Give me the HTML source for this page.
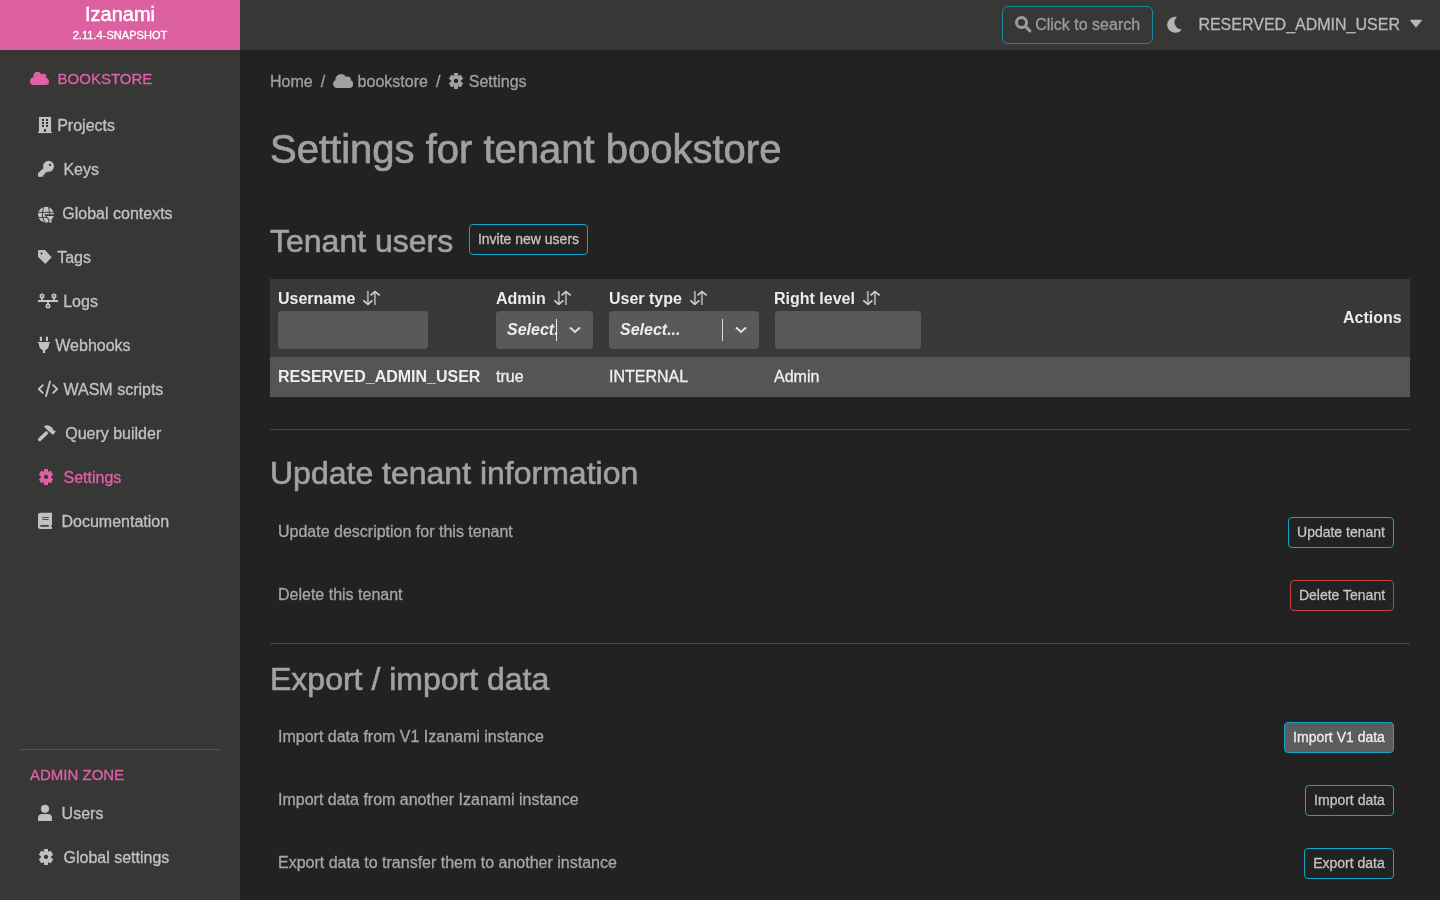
<!DOCTYPE html>
<html><head><meta charset="utf-8">
<style>
*{box-sizing:border-box;margin:0;padding:0}
html,body{width:1440px;height:900px;overflow:hidden;background:#222222;font-family:"Liberation Sans",sans-serif;font-size:16px;line-height:1}
.a{position:absolute;white-space:nowrap;line-height:16px}
svg{position:absolute;overflow:visible}
#root{position:absolute;left:0;top:0;width:1440px;height:900px;background:#222222;will-change:transform;overflow:hidden}
.a,.btn{-webkit-text-stroke:0.3px currentColor}
#side{position:absolute;left:0;top:0;width:240px;height:900px;background:#373735}
#brand{position:absolute;left:0;top:0;width:240px;height:50px;background:#dc5fa0;color:#fff;text-align:center}
#top{position:absolute;left:240px;top:0;width:1200px;height:50px;background:#373735}
.nav{color:#c2c2c2;font-size:16px}
.pink{color:#e060a8}
.btn{position:absolute;border:1px solid #14a6c8;border-radius:4px;color:#c4c4c4;font-size:14px;line-height:29px;text-align:center;white-space:nowrap}
.h2{color:#a2a2a2;font-size:32px;line-height:32px;-webkit-text-stroke:0.6px currentColor}
.txt{color:#a6a6a6;font-size:16px}
.hr{position:absolute;left:270px;width:1140px;height:1px;background:#474747}
.th{color:#ececec;font-weight:bold;font-size:16px;-webkit-text-stroke:0}
.inp{position:absolute;top:311px;height:38px;background:#595959;border-radius:4px}
.sel{color:#ececec;font-weight:bold;font-style:italic;font-size:16px;-webkit-text-stroke:0}
</style></head><body>
<div id="root">
<div id="side"></div>
<div id="brand">
  <div class="a" style="left:0;width:240px;top:4px;font-size:20px;line-height:20px;-webkit-text-stroke:0.5px #fff">Izanami</div>
  <div class="a" style="left:0;width:240px;top:30px;font-size:11px;line-height:11px;-webkit-text-stroke:0.35px #fff;letter-spacing:0.05px">2.11.4-SNAPSHOT</div>
</div>
<div id="top"></div>

<!-- sidebar -->
<svg style="left:26px;top:64px" width="30" height="30" viewBox="0 0 900 900"><g fill="#df60a4"><circle cx="345" cy="355" r="125"/><circle cx="525" cy="380" r="85"/><circle cx="240" cy="515" r="118"/><circle cx="585" cy="525" r="105"/><rect x="240" y="420" width="345" height="210"/></g></svg>
<div class="a pink" style="left:57.6px;top:71px;font-size:15px;line-height:15px">BOOKSTORE</div>

<svg style="left:34px;top:112px" width="24" height="24" viewBox="0 0 900 900"><g fill="#c0c0c0"><rect x="185" y="185" width="455" height="575"/><rect x="145" y="745" width="535" height="45"/></g><g fill="#2a2a2a"><rect x="300" y="265" width="75" height="70"/><rect x="450" y="265" width="75" height="70"/><rect x="300" y="375" width="75" height="70"/><rect x="450" y="375" width="75" height="70"/><rect x="300" y="485" width="75" height="70"/><rect x="450" y="485" width="75" height="70"/><rect x="375" y="640" width="70" height="105"/></g></svg>
<div class="a nav" style="left:57.2px;top:118px">Projects</div>

<svg style="left:34px;top:156px" width="24" height="24" viewBox="0 0 900 900"><g fill="#c0c0c0"><circle cx="545" cy="385" r="205"/><path d="M150 650 L350 460 L520 590 L500 610 L420 620 L420 690 L350 690 L350 760 L330 780 L150 780 Z"/></g><circle cx="600" cy="335" r="42" fill="#262626"/></svg>
<div class="a nav" style="left:63.4px;top:162px">Keys</div>

<svg style="left:34px;top:200px" width="24" height="24" viewBox="0 0 900 900"><circle cx="450" cy="550" r="300" fill="#c0c0c0"/><g stroke="#373735" stroke-width="34" fill="none"><path d="M130 465 H770 M130 655 H450 M318 465 V655 M582 465 V540 M362 240 L322 465 M540 240 L585 465 M330 655 L405 870"/></g><path d="M395 535 H790 V610 L700 745 V880 H540 V745 L440 640 Z" fill="#373735"/><path d="M462 600 H755 L655 735 V850 H578 V735 Z" fill="#c0c0c0"/></svg>
<div class="a nav" style="left:62.3px;top:206px">Global contexts</div>

<svg style="left:34px;top:244px" width="30" height="30" viewBox="0 0 900 900"><path d="M150 180 H330 L530 400 L340 600 L120 380 V210 Q120 180 150 180 Z" fill="#c0c0c0"/><circle cx="225" cy="285" r="28" fill="#262626"/></svg>
<div class="a nav" style="left:57.2px;top:250px">Tags</div>

<svg style="left:34px;top:288px" width="30" height="30" viewBox="0 0 900 900"><g fill="#7c7c7c" stroke="#c8c8c8" stroke-width="40"><circle cx="240" cy="240" r="55"/><circle cx="600" cy="240" r="55"/><circle cx="420" cy="540" r="55"/></g><g fill="#c8c8c8"><rect x="120" y="360" width="600" height="60"/><rect x="215" y="290" width="50" height="80"/><rect x="575" y="290" width="50" height="80"/><rect x="395" y="410" width="50" height="80"/></g></svg>
<div class="a nav" style="left:63.2px;top:294px">Logs</div>

<svg style="left:34px;top:332px" width="30" height="30" viewBox="0 0 900 900"><g fill="#c0c0c0"><rect x="175" y="140" width="65" height="130"/><rect x="355" y="140" width="65" height="130"/><path d="M115 300 H480 V340 H455 Q450 520 335 545 V630 H265 V545 Q150 520 145 340 H115 Z"/></g></svg>
<div class="a nav" style="left:55.3px;top:338px">Webhooks</div>

<svg style="left:34px;top:376px" width="30" height="30" viewBox="0 0 900 900"><g fill="none" stroke="#c4c4c4" stroke-width="55" stroke-linecap="round" stroke-linejoin="round"><path d="M265 275 L145 390 L265 505"/><path d="M480 165 L360 605"/><path d="M575 275 L695 390 L575 505"/></g></svg>
<div class="a nav" style="left:63.5px;top:382px">WASM scripts</div>

<svg style="left:34px;top:420px" width="30" height="30" viewBox="0 0 900 900"><path d="M170 585 L380 380" stroke="#c0c0c0" stroke-width="105" stroke-linecap="round"/><path fill="#c0c0c0" d="M292 192 Q440 100 558 250 L568 290 L658 345 L565 448 L505 392 L400 300 Q340 230 292 192 Z"/><path d="M345 300 L430 385" stroke="#373735" stroke-width="30"/></svg>
<div class="a nav" style="left:65.2px;top:426px">Query builder</div>

<svg style="left:34px;top:464px" width="30" height="30" viewBox="0 0 900 900"><g id="gear"><path fill="#df60a4" fill-rule="evenodd" d="M300 150 H420 V235 L505 205 L575 320 L510 375 V405 L575 460 L505 575 L420 545 V630 H300 V545 L215 575 L145 460 L210 405 V375 L145 320 L215 205 L300 235 Z M360 320 A65 65 0 1 0 360.1 320 Z"/></g></svg>
<div class="a pink" style="left:63.5px;top:470px">Settings</div>

<svg style="left:34px;top:508px" width="30" height="30" viewBox="0 0 900 900"><path d="M190 145 H540 V630 H190 Q120 630 120 560 V215 Q120 145 190 145 Z" fill="#c0c0c0"/><g fill="#2a2a2a"><rect x="245" y="270" width="200" height="25" rx="12"/><rect x="245" y="335" width="200" height="25" rx="12"/><rect x="190" y="515" width="255" height="45"/><rect x="520" y="515" width="25" height="45"/></g></svg>
<div class="a nav" style="left:61.5px;top:514px">Documentation</div>

<div style="position:absolute;left:20px;top:749px;width:200px;height:1px;background:#555555"></div>
<div class="a pink" style="left:30px;top:767px;font-size:15px;line-height:15px">ADMIN ZONE</div>

<svg style="left:34px;top:800px" width="30" height="30" viewBox="0 0 900 900"><g fill="#c0c0c0"><circle cx="330" cy="265" r="122"/><path d="M120 630 V540 Q120 420 250 420 H410 Q540 420 540 540 V630 Z"/></g></svg>
<div class="a nav" style="left:61.6px;top:806px">Users</div>

<svg style="left:34px;top:844px" width="30" height="30" viewBox="0 0 900 900"><path fill="#c0c0c0" fill-rule="evenodd" d="M300 150 H420 V235 L505 205 L575 320 L510 375 V405 L575 460 L505 575 L420 545 V630 H300 V545 L215 575 L145 460 L210 405 V375 L145 320 L215 205 L300 235 Z M360 320 A65 65 0 1 0 360.1 320 Z"/></svg>
<div class="a nav" style="left:63.5px;top:850px">Global settings</div>

<!-- topbar -->
<div style="position:absolute;left:1002px;top:6px;width:151px;height:38px;border:1px solid #1b8c9e;border-radius:6px"></div>
<svg style="left:1010px;top:10px" width="30" height="30" viewBox="0 0 900 900"><circle cx="345" cy="375" r="152" fill="none" stroke="#9c9c9c" stroke-width="88"/><path d="M490 520 L595 625" stroke="#9c9c9c" stroke-width="95" stroke-linecap="round"/></svg>
<div class="a" style="left:1035.2px;top:17px;color:#9c9c9c">Click to search</div>
<svg style="left:1160px;top:10px" width="30" height="30" viewBox="0 0 900 900"><path d="M510 210 A240 240 0 1 0 652 582 A212 212 0 0 1 510 210 Z" fill="#b4b4b4"/></svg>
<div class="a" style="left:1198.4px;top:17px;color:#b8b8b8">RESERVED_ADMIN_USER</div>
<svg style="left:1380px;top:10px" width="50" height="30" viewBox="0 0 1440 864"><path d="M890 300 H1190 L1035 480 Z" fill="#b8b8b8" stroke="#b8b8b8" stroke-width="40" stroke-linejoin="round"/></svg>

<!-- breadcrumb -->
<div class="a" style="left:270px;top:74px;color:#a0a0a0">Home</div>
<div class="a" style="left:320.7px;top:74px;color:#a0a0a0">/</div>
<svg style="left:328px;top:68px" width="30" height="25" viewBox="0 0 1080 900"><g fill="#a0a0a0"><circle cx="470" cy="420" r="205"/><circle cx="700" cy="430" r="125"/><circle cx="330" cy="570" r="150"/><circle cx="760" cy="575" r="145"/><rect x="330" y="480" width="430" height="240"/></g></svg>
<div class="a" style="left:357.6px;top:74px;color:#a0a0a0">bookstore</div>
<div class="a" style="left:436px;top:74px;color:#a0a0a0">/</div>
<svg style="left:444.4px;top:68px" width="30" height="30" viewBox="0 0 900 900"><path fill="#a0a0a0" fill-rule="evenodd" d="M300 150 H420 V235 L505 205 L575 320 L510 375 V405 L575 460 L505 575 L420 545 V630 H300 V545 L215 575 L145 460 L210 405 V375 L145 320 L215 205 L300 235 Z M360 320 A65 65 0 1 0 360.1 320 Z"/></svg>
<div class="a" style="left:468.8px;top:74px;color:#a0a0a0">Settings</div>

<div class="a" style="left:270px;top:129.4px;color:#a0a0a0;font-size:40px;line-height:40px;-webkit-text-stroke:0.7px currentColor">Settings for tenant bookstore</div>

<div class="a h2" style="left:270px;top:225px">Tenant users</div>
<div class="btn" style="left:469px;top:224px;width:119px;height:31px">Invite new users</div>

<!-- table -->
<div style="position:absolute;left:270px;top:279px;width:1140px;height:78px;background:#383837"></div>
<div style="position:absolute;left:270px;top:357px;width:1140px;height:40px;background:#555555"></div>
<div class="a th" style="left:278px;top:291px">Username</div>
<div class="a th" style="left:496px;top:291px">Admin</div>
<div class="a th" style="left:609px;top:291px">User type</div>
<div class="a th" style="left:774px;top:291px">Right level</div>
<div class="a th" style="left:1343px;top:310px">Actions</div>
<svg style="left:358px;top:286px" width="26" height="24" viewBox="0 0 975 900"><g fill="none" stroke-linecap="butt"><path d="M370 185 V640 M635 250 V710" stroke="#9e9e9e" stroke-width="75"/><path d="M200 540 L370 690 L540 540 M470 355 L635 210 L815 355" stroke="#d2d2d2" stroke-width="62"/></g></svg>
<svg style="left:548.5px;top:286px" width="26" height="24" viewBox="0 0 975 900"><g fill="none" stroke-linecap="butt"><path d="M370 185 V640 M635 250 V710" stroke="#9e9e9e" stroke-width="75"/><path d="M200 540 L370 690 L540 540 M470 355 L635 210 L815 355" stroke="#d2d2d2" stroke-width="62"/></g></svg>
<svg style="left:684.5px;top:286px" width="26" height="24" viewBox="0 0 975 900"><g fill="none" stroke-linecap="butt"><path d="M370 185 V640 M635 250 V710" stroke="#9e9e9e" stroke-width="75"/><path d="M200 540 L370 690 L540 540 M470 355 L635 210 L815 355" stroke="#d2d2d2" stroke-width="62"/></g></svg>
<svg style="left:858px;top:286px" width="26" height="24" viewBox="0 0 975 900"><g fill="none" stroke-linecap="butt"><path d="M370 185 V640 M635 250 V710" stroke="#9e9e9e" stroke-width="75"/><path d="M200 540 L370 690 L540 540 M470 355 L635 210 L815 355" stroke="#d2d2d2" stroke-width="62"/></g></svg>
<div class="inp" style="left:278px;width:150px"></div>
<div class="inp" style="left:496px;width:97px"></div>
<div class="inp" style="left:609px;width:150px"></div>
<div class="inp" style="left:775px;width:146px"></div>
<div class="a sel" style="left:507px;top:322px">Select.</div>
<div style="position:absolute;left:556px;top:319px;width:1px;height:22px;background:#ececec"></div>
<div class="a sel" style="left:620px;top:322px">Select...</div>
<div style="position:absolute;left:722px;top:319px;width:1px;height:22px;background:#dcdcdc"></div>
<svg style="left:568px;top:325px" width="14" height="10" viewBox="0 0 14 10"><path d="M2 2.5 L7 7 L12 2.5" fill="none" stroke="#e0e0e0" stroke-width="2"/></svg>
<svg style="left:734px;top:325px" width="14" height="10" viewBox="0 0 14 10"><path d="M2 2.5 L7 7 L12 2.5" fill="none" stroke="#e0e0e0" stroke-width="2"/></svg>
<div class="a" style="left:278px;top:369px;color:#eeeeee;font-weight:bold;-webkit-text-stroke:0">RESERVED_ADMIN_USER</div>
<div class="a" style="left:496px;top:369px;color:#f0f0f0">true</div>
<div class="a" style="left:609px;top:369px;color:#f0f0f0">INTERNAL</div>
<div class="a" style="left:774px;top:369px;color:#f0f0f0">Admin</div>

<div class="hr" style="top:429px"></div>
<div class="a h2" style="left:270px;top:457px">Update tenant information</div>
<div class="a txt" style="left:278px;top:524px">Update description for this tenant</div>
<div class="btn" style="left:1288px;top:517px;width:106px;height:31px">Update tenant</div>
<div class="a txt" style="left:278px;top:587px">Delete this tenant</div>
<div class="btn" style="left:1290px;top:580px;width:104px;height:31px;border-color:#c9433f">Delete Tenant</div>

<div class="hr" style="top:643px"></div>
<div class="a h2" style="left:270px;top:663px">Export / import data</div>
<div class="a txt" style="left:278px;top:729px">Import data from V1 Izanami instance</div>
<div class="btn" style="left:1284px;top:722px;width:110px;height:31px;background:#5c5c5c;color:#eeeeee">Import V1 data</div>
<div class="a txt" style="left:278px;top:792px">Import data from another Izanami instance</div>
<div class="btn" style="left:1305px;top:785px;width:89px;height:31px">Import data</div>
<div class="a txt" style="left:278px;top:855px">Export data to transfer them to another instance</div>
<div class="btn" style="left:1304px;top:848px;width:90px;height:31px">Export data</div>
</div>
</body></html>
